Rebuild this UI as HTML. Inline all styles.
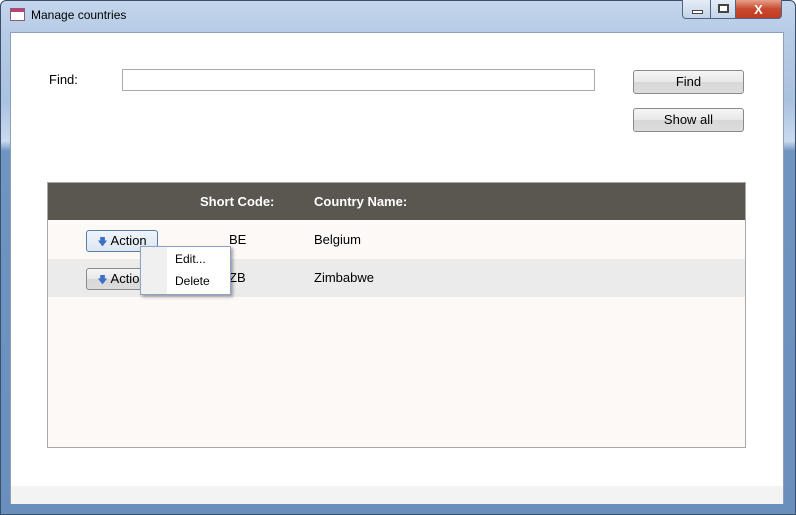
<!DOCTYPE html>
<html><head><style>
*{margin:0;padding:0;box-sizing:border-box}
body{width:796px;height:515px;overflow:hidden;background:#fff;font-family:"Liberation Sans",sans-serif;font-size:13px;color:#000;position:relative}
.frame{position:absolute;left:0;top:0;width:796px;height:515px;background:linear-gradient(180deg,#c3d6ec 0px,#b7cce6 30px,#a9c2df 100px,#c9daee 140px,#7094c0 150px,#6a8fbd 515px);border-radius:6px 6px 0 0;border:1px solid #3a4f6c}
.title{position:absolute;left:31px;top:8px;font-size:12px;color:#000}
.icon{position:absolute;left:10px;top:8px;width:15px;height:13px;border:1px solid #8a5a7a;background:#fff}
.icon:before{content:"";position:absolute;left:0;right:0;top:0;height:3px;background:#c04070}
.ctl{position:absolute;top:0;height:19px;border:1px solid #4f6585;border-top:none}
.client{position:absolute;left:10px;top:32px;width:774px;height:472px;background:#fff;border:1px solid #8aa0bb}
.bottom{position:absolute;left:0;top:453px;width:772px;height:18px;background:#f3f3f3}
.btn{position:absolute;border:1px solid #8a8a8a;border-radius:3px;background:linear-gradient(#f5f5f5,#e8e8e8 50%,#d8d8d8 51%,#dcdcdc);text-align:center;font-size:13px}
.t{position:absolute}
</style></head><body>
<div class="frame"></div>
<div class="icon"></div>
<div class="title">Manage countries</div>
<div class="ctl" style="left:682px;width:29px;border-radius:0 0 0 4px;background:linear-gradient(#e5edf6,#c4d4e8)"><div style="position:absolute;left:9px;top:10px;width:11px;height:4px;background:#fff;border:1px solid #444"></div></div>
<div class="ctl" style="left:710px;width:26px;background:linear-gradient(#e5edf6,#c4d4e8)"><div style="position:absolute;left:7px;top:4px;width:11px;height:9px;border:2px solid #444;background:#fff"></div></div>
<div class="ctl" style="left:735px;width:47px;background:linear-gradient(#e8a08a,#c84a30 50%,#c03a20);color:#fff;font-weight:bold;text-align:center;font-size:13px;line-height:19px;border-radius:0 0 4px 0">X</div>
<div class="client">
 <div class="t" style="left:38px;top:39px">Find:</div>
 <div style="position:absolute;left:111px;top:36px;width:473px;height:22px;border:1px solid #a9a9a9;background:#fff"></div>
 <div class="btn" style="left:622px;top:37px;width:111px;height:24px;line-height:22px">Find</div>
 <div class="btn" style="left:622px;top:75px;width:111px;height:24px;line-height:22px">Show all</div>
 <div style="position:absolute;left:36px;top:149px;width:699px;height:266px;border:1px solid #a8a8a8;background:#fdf9f6">
  <div style="position:absolute;left:0;top:0;width:697px;height:37px;background:#59574f;color:#fff;font-weight:bold">
   <div class="t" style="left:152px;top:11px">Short Code:</div>
   <div class="t" style="left:266px;top:11px">Country Name:</div>
  </div>
  <div style="position:absolute;left:0;top:76px;width:697px;height:38px;background:#ebebeb"></div>
  <div class="t" style="left:181px;top:49px">BE</div>
  <div class="t" style="left:266px;top:49px">Belgium</div>
  <div class="t" style="left:181px;top:87px">ZB</div>
  <div class="t" style="left:266px;top:87px">Zimbabwe</div>
  <div class="btn" style="left:38px;top:47px;width:72px;height:22px;line-height:20px;border-color:#5a7da8;background:linear-gradient(#eef4fa,#dde7f1)"><span style="color:#3d6fc9;font-size:10px">&#129095;</span> Action</div>
  <div class="btn" style="left:38px;top:85px;width:72px;height:22px;line-height:20px"><span style="color:#3d6fc9;font-size:10px">&#129095;</span> Action</div>
  <div style="position:absolute;left:92px;top:63px;width:91px;height:49px;border:1px solid #8ca4c4;background:linear-gradient(90deg,#f0f0f0 26px,#fff 26px);box-shadow:2px 2px 3px rgba(0,0,0,.35);font-size:12px">
   <div class="t" style="left:34px;top:5px">Edit...</div>
   <div class="t" style="left:34px;top:27px">Delete</div>
  </div>
 </div>
 <div class="bottom"></div>
</div>
</body></html>
